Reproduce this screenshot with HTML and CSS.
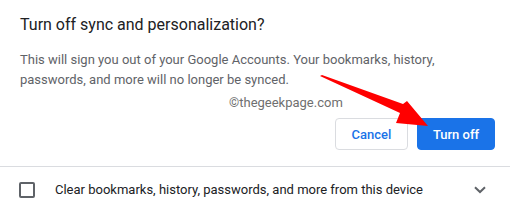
FILE: index.html
```html
<!DOCTYPE html>
<html>
<head>
<meta charset="utf-8">
<link rel="stylesheet" href="styles.css">
</head>
<body>
<div class="dialog">
  <div class="main">
    <h1 class="title">Turn off sync and personalization?</h1>
    <p class="desc">This will sign you out of your Google Accounts. Your bookmarks, history, passwords, and more will no longer be synced.</p>
    <div class="actions">
      <button class="btn btn-secondary">Cancel</button>
      <button class="btn btn-primary">Turn off</button>
    </div>
  </div>
  <div class="footer">
    <span class="checkbox"></span>
    <span class="footer-label">Clear bookmarks, history, passwords, and more from this device</span>
    <svg class="chevron" width="12" height="8" viewBox="0 0 12 8"><path d="M1 1.2 L6 6 L11 1.2" fill="none" stroke="#5f6368" stroke-width="2"/></svg>
  </div>
  <div class="watermark">©thegeekpage.com</div>
  <svg class="arrow" width="120" height="60" viewBox="0 0 120 60">
    <polygon points="0,5 2,4 83,33 87,30 108,55 76,52 80,42" fill="#ff0000"/>
  </svg>
</div>
</body>
</html>
```

FILE: styles.css
```css
html, body {
  margin: 0;
  padding: 0;
  background: #ffffff;
}
.dialog {
  position: relative;
  width: 510px;
  height: 212px;
  font-family: Roboto, "Liberation Sans", Arial, sans-serif;
  overflow: hidden;
}
.main {
  padding: 13px 15px 0 20px;
  border-bottom: 1px solid #dadce0;
  padding-bottom: 16px;
}
.title {
  margin: 0;
  font-size: 16px;
  line-height: 24px;
  font-weight: 400;
  color: #202124;
}
.desc {
  margin: 13px 5px 0 0;
  font-size: 13px;
  line-height: 20px;
  color: #5f6368;
}
.actions {
  display: flex;
  justify-content: flex-end;
  gap: 9px;
  margin-top: 28px;
}
.btn {
  height: 32px;
  border-radius: 4px;
  font-family: Roboto, "Liberation Sans", Arial, sans-serif;
  font-size: 13px;
  font-weight: 500;
  padding: 0;
  cursor: pointer;
}
.btn-secondary {
  width: 73px;
  background: #ffffff;
  border: 1px solid #dadce0;
  color: #1a73e8;
}
.btn-primary {
  width: 78px;
  background: #1a73e8;
  border: 1px solid #1a73e8;
  color: #ffffff;
}
.footer {
  display: flex;
  align-items: center;
  height: 45px;
  padding: 0 24px 0 19px;
}
.checkbox {
  box-sizing: border-box;
  width: 16px;
  height: 16px;
  border: 2px solid #5f6368;
  border-radius: 2px;
  flex: none;
}
.footer-label {
  margin-left: 20px;
  font-size: 13px;
  color: #202124;
  flex: 1;
}
.chevron {
  flex: none;
  margin-top: 1px;
}
.watermark {
  position: absolute;
  left: 229px;
  top: 95px;
  font-size: 13px;
  line-height: 16px;
  color: #6f6f6f;
}
.arrow {
  position: absolute;
  left: 320px;
  top: 71px;
}
```
